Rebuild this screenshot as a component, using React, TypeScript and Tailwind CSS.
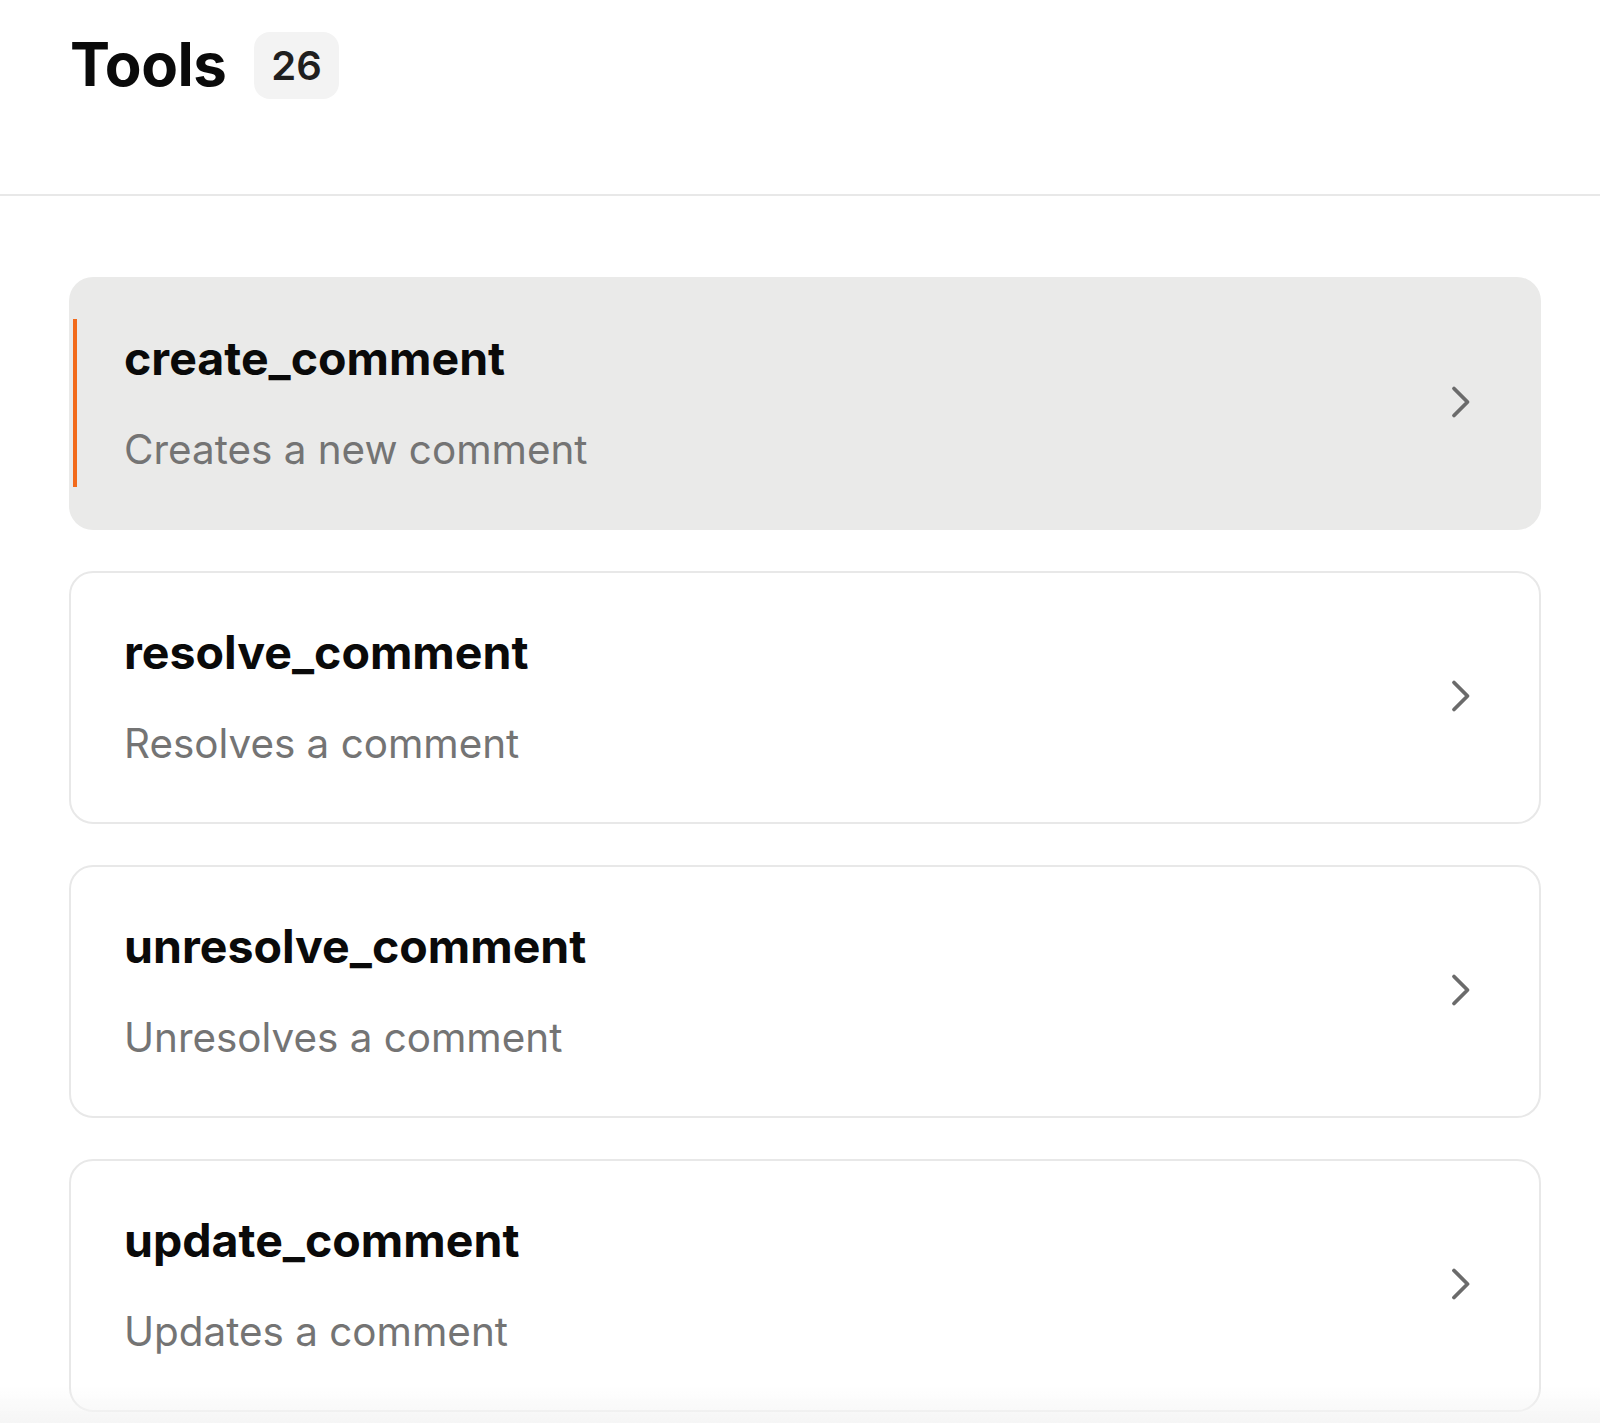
type Tool = {
  name: string;
  description: string;
};

const tools: Tool[] = [
  { name: 'create_comment', description: 'Creates a new comment' },
  { name: 'resolve_comment', description: 'Resolves a comment' },
  { name: 'unresolve_comment', description: 'Unresolves a comment' },
  { name: 'update_comment', description: 'Updates a comment' },
];

function Chevron() {
  return (
    <svg width="24" height="36" viewBox="0 0 24 36" fill="none" className="shrink-0">
      <path
        d="M5 4.5 L18.5 18 L5 31.5"
        stroke="#6b6b6b"
        strokeWidth="3.8"
        strokeLinecap="round"
        strokeLinejoin="round"
      />
    </svg>
  );
}

function ToolCard({ tool, active }: { tool: Tool; active?: boolean }) {
  return (
    <div
      className={`relative flex items-center justify-between rounded-[24px] border-2 pt-[51px] pb-[54px] pl-[53px] pr-[66px] ${
        active ? 'border-transparent bg-[#eaeae9]' : 'border-[#e8e8e8] bg-white'
      }`}
    >
      {/* selection marker */}
      {active && <span className="absolute left-[2px] top-[40px] bottom-[41px] w-[4px] bg-[#f26a1b]" />}
      <div className="flex flex-col">
        <h3 className="text-[46.5px] font-bold leading-[56px] text-[#0a0a0a]">{tool.name}</h3>
        <p className="mt-[40px] text-[40.4px] leading-[48px] text-[#747474]">{tool.description}</p>
      </div>
      <Chevron />
    </div>
  );
}

export default function App() {
  return (
    <div className="relative min-h-screen bg-white" style={{ fontFamily: 'Inter, "Noto Sans", sans-serif' }}>
      <header className="flex h-[196px] items-start border-b-2 border-[#e8e8e8] pl-[70px] pt-[32px]">
        <div className="flex items-start">
          <h1 className="mt-[2px] text-[60px] font-bold leading-[60px] tracking-[-0.5px] text-[#0a0a0a]">Tools</h1>
          <span className="ml-[28px] flex h-[67px] items-center rounded-[16px] bg-[#f3f3f3] px-[17px] text-[40px] font-semibold leading-none text-[#1f1f1f]">
            26
          </span>
        </div>
      </header>

      <main className="flex flex-col gap-[41px] pt-[81px] pl-[69px] pr-[59px] pb-[10px]">
        {tools.map((tool, i) => (
          <ToolCard key={tool.name} tool={tool} active={i === 0} />
        ))}
      </main>

      <div className="pointer-events-none fixed inset-x-0 bottom-0 h-[36px] bg-gradient-to-b from-[#ffffff00] to-[#f5f5f5]" />
    </div>
  );
}
